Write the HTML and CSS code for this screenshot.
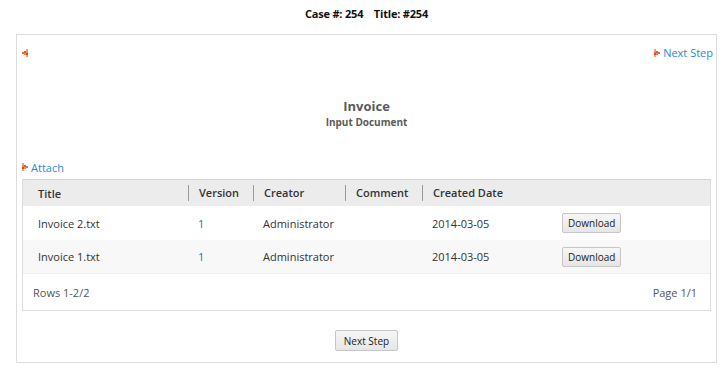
FILE: index.html
```html
<!DOCTYPE html>
<html>
<head>
  <meta charset="UTF-8">
  <title>Case 254 - Invoice</title>
  <link rel="stylesheet" href="styles.css">
</head>
<body>
  <div class="case-title">Case #: 254 &nbsp;&nbsp; Title: #254</div>

  <div class="step-box">
    <div class="step-nav">
      <a class="nav-prev" href="#">
        <svg width="6" height="8" viewBox="0 0 6 8">
          <rect x="4" y="0" width="2" height="2" fill="#f4a07a"/>
          <rect x="2" y="2" width="2" height="2" fill="#e0602a"/>
          <rect x="4" y="2" width="2" height="2" fill="#f08a5a"/>
          <rect x="0" y="3" width="2" height="2" fill="#e86a3a"/>
          <rect x="2" y="4" width="2" height="2" fill="#f08a5a"/>
          <rect x="4" y="4" width="2" height="2" fill="#d24a1a"/>
          <rect x="4" y="6" width="2" height="2" fill="#f4a07a"/>
        </svg>
      </a>
      <a class="nav-next" href="#">
        <svg width="6" height="8" viewBox="0 0 6 8">
          <rect x="0" y="0" width="2" height="2" fill="#f4a07a"/>
          <rect x="0" y="2" width="2" height="2" fill="#f08a5a"/>
          <rect x="2" y="2" width="2" height="2" fill="#e0602a"/>
          <rect x="4" y="3" width="2" height="2" fill="#e86a3a"/>
          <rect x="0" y="4" width="2" height="2" fill="#d24a1a"/>
          <rect x="2" y="4" width="2" height="2" fill="#f08a5a"/>
          <rect x="0" y="6" width="2" height="2" fill="#f4a07a"/>
        </svg>
        Next Step
      </a>
    </div>

    <div class="doc-head">
      <div class="doc-title">Invoice</div>
      <div class="doc-sub">Input Document</div>
    </div>

    <a class="attach-link" href="#">
      <svg width="6" height="8" viewBox="0 0 6 8">
        <rect x="0" y="0" width="2" height="2" fill="#f4a07a"/>
        <rect x="0" y="2" width="2" height="2" fill="#f08a5a"/>
        <rect x="2" y="2" width="2" height="2" fill="#e0602a"/>
        <rect x="4" y="3" width="2" height="2" fill="#e86a3a"/>
        <rect x="0" y="4" width="2" height="2" fill="#d24a1a"/>
        <rect x="2" y="4" width="2" height="2" fill="#f08a5a"/>
        <rect x="0" y="6" width="2" height="2" fill="#f4a07a"/>
      </svg>
      Attach
    </a>

    <div class="grid-box">
      <div class="grid-row grid-head">
        <div class="cell c-title">Title</div>
        <div class="cell c-version">Version</div>
        <div class="cell c-creator">Creator</div>
        <div class="cell c-comment">Comment</div>
        <div class="cell c-date">Created Date</div>
        <div class="cell c-action"></div>
      </div>
      <div class="grid-row">
        <div class="cell c-title">Invoice 2.txt</div>
        <div class="cell c-version num">1</div>
        <div class="cell c-creator">Administrator</div>
        <div class="cell c-comment"></div>
        <div class="cell c-date">2014-03-05</div>
        <div class="cell c-action"><button class="btn-small">Download</button></div>
      </div>
      <div class="grid-row alt">
        <div class="cell c-title">Invoice 1.txt</div>
        <div class="cell c-version num">1</div>
        <div class="cell c-creator">Administrator</div>
        <div class="cell c-comment"></div>
        <div class="cell c-date">2014-03-05</div>
        <div class="cell c-action"><button class="btn-small">Download</button></div>
      </div>
      <div class="grid-foot">
        <span>Rows 1-2/2</span>
        <span>Page 1/1</span>
      </div>
    </div>

    <div class="step-actions">
      <button class="btn">Next Step</button>
    </div>
  </div>
</body>
</html>
```

FILE: styles.css
```css
body {
  font-family: 'Open Sans', Arial, sans-serif;
  background: #ffffff;
  margin: 0;
  padding: 0;
  color: #333333;
  font-size: 11px;
}

a {
  text-decoration: none;
}

.case-title {
  text-align: center;
  font-weight: 700;
  font-size: 11px;
  color: #111111;
  padding: 6px 0 0 8px;
  height: 34px;
  box-sizing: border-box;
  letter-spacing: -0.2px;
}

/* Main step box */
.step-box {
  margin: 0 8px 0 16px;
  border: 1px solid #dddddd;
  height: 329px;
  box-sizing: border-box;
  padding: 0 5px;
}

.step-nav {
  display: flex;
  justify-content: space-between;
  align-items: center;
  height: 35px;
  margin-right: -2px;
}

.nav-prev {
  display: flex;
  align-items: center;
}

.nav-next, .attach-link {
  display: flex;
  align-items: center;
  gap: 3px;
  color: #2a8ad4;
  font-size: 11px;
}

.doc-head {
  text-align: center;
  color: #5a5a5a;
  font-weight: 700;
  padding-top: 27px;
  height: 88px;
  box-sizing: border-box;
}

.doc-title {
  font-size: 13px;
  line-height: 18px;
}

.doc-sub {
  font-size: 10px;
  line-height: 14px;
}

.attach-link {
  height: 18px;
  width: max-content;
  margin-bottom: 3px;
}

/* Grid */
.grid-box {
  border: 1px solid #dddddd;
  border-top-color: #d4d4d4;
}

.grid-row {
  display: flex;
  align-items: center;
  height: 34px;
  background: #ffffff;
}

.grid-row.alt {
  background: #f8f8f8;
  height: 33px;
}

.grid-head {
  background: #ececec;
  height: 26px;
  font-weight: 600;
  color: #333333;
}

.cell {
  padding-left: 15px;
  box-sizing: border-box;
  white-space: nowrap;
}

.grid-head .cell + .cell {
  border-left: 1px solid #999999;
  padding-left: 9px;
  line-height: 16px;
}

.grid-row .cell + .cell {
  padding-left: 10px;
}

.c-title { width: 165px; }
.c-version { width: 65px; }
.c-creator { width: 92px; }
.c-comment { width: 77px; }
.c-date { width: 130px; }
.c-action { flex: 1; }

.num {
  color: #2a6db0;
}

.grid-foot {
  display: flex;
  justify-content: space-between;
  height: 36px;
  align-items: center;
  padding: 0 13px 0 10px;
  color: #555555;
  border-top: 1px solid #eeeeee;
}

.btn-small, .btn {
  font-family: 'Open Sans', Arial, sans-serif;
  font-size: 10px;
  color: #222222;
  background: linear-gradient(#f6f6f6, #e6e6e6);
  border: 1px solid #c6c6c6;
  border-radius: 2px;
  padding: 0 5px;
  height: 20px;
}

.step-actions {
  display: flex;
  justify-content: center;
  padding-top: 19px;
}

.btn {
  height: 21px;
  padding: 0 8px;
}
```
